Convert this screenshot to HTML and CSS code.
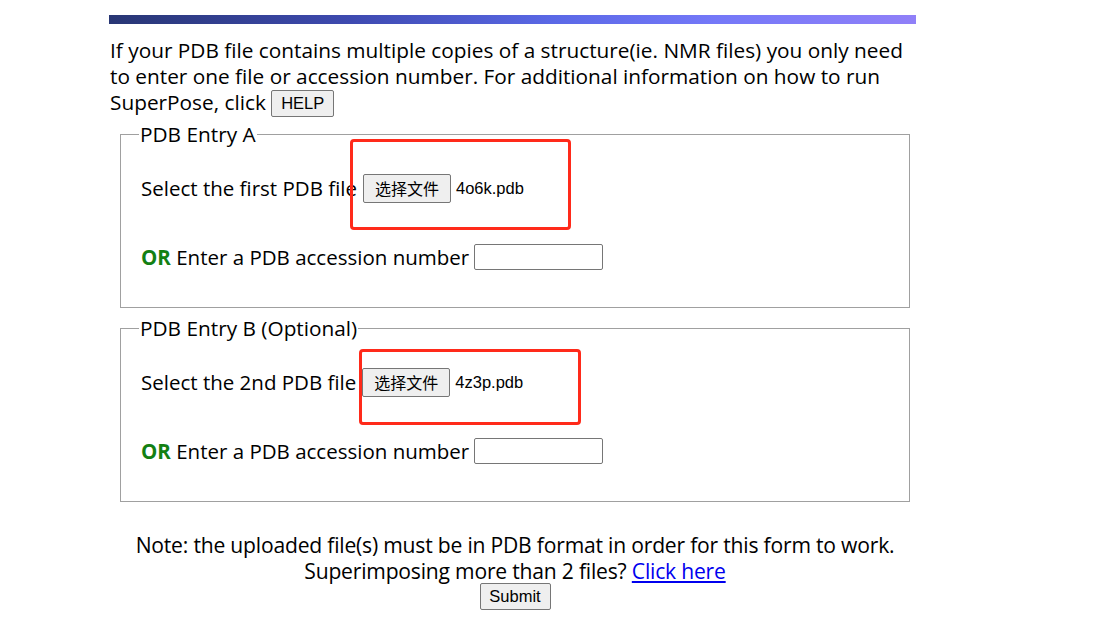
FILE: index.html
```html
<!DOCTYPE html>
<html>
<head>
<meta charset="utf-8">
<link rel="stylesheet" href="styles.css">
</head>
<body>
<div class="page">
  <div class="bar"></div>
  <p class="intro">If your PDB file contains multiple copies of a structure(ie. NMR files) you only need to enter one file or accession number. For additional information on how to run SuperPose, click <button class="btn help">HELP</button></p>
  <fieldset class="entry">
    <legend>PDB Entry A</legend>
    <div class="row file-row">
      <span>Select the first PDB file</span>
      <span class="file"><button class="btn choose">选择文件</button><span class="fname">4o6k.pdb</span></span>
      <span class="mark mark-a"></span>
    </div>
    <div class="row acc-row">
      <span><b class="or">OR</b> Enter a PDB accession number</span>
      <input class="acc" type="text">
    </div>
  </fieldset>
  <fieldset class="entry">
    <legend>PDB Entry B (Optional)</legend>
    <div class="row file-row">
      <span>Select the 2nd PDB file</span>
      <span class="file"><button class="btn choose">选择文件</button><span class="fname">4z3p.pdb</span></span>
      <span class="mark mark-b"></span>
    </div>
    <div class="row acc-row">
      <span><b class="or">OR</b> Enter a PDB accession number</span>
      <input class="acc" type="text">
    </div>
  </fieldset>
  <div class="note">
    <div>Note: the uploaded file(s) must be in PDB format in order for this form to work.</div>
    <div>Superimposing more than 2 files? <a href="#">Click here</a></div>
    <button class="btn submit">Submit</button>
  </div>
</div>
</body>
</html>
```
FILE: styles.css
```css
html, body {
  margin: 0;
  background: #fff;
}
body {
  font-family: "Open Sans", "Noto Sans", sans-serif;
  font-size: 21px;
  color: #000;
}
.page {
  width: 812px;
  margin-left: 109px;
  padding-top: 15px;
}
.bar {
  width: 807px;
  height: 9px;
  background: linear-gradient(to right, #283674 0%, #3e4ab0 30%, #5a68e6 55%, #7478f8 75%, #9080f8 100%);
}
.intro {
  margin: 13px 0 0 1px;
  width: 806px;
  line-height: 26px;
  font-size: 20.8px;
}
.btn {
  font-family: "Liberation Sans", Arial, sans-serif;
  font-size: 16.5px;
  background: #efefef;
  border: 1px solid #767676;
  border-radius: 2px;
  color: #000;
  padding: 1px 6px;
  margin: 0;
  box-sizing: border-box;
}
.help {
  height: 27px;
  width: 63px;
  vertical-align: 1px;
  margin-left: 0;
  padding: 0;
}
.entry {
  position: relative;
  margin: 4px 0 0 11px;
  width: 790px;
  border: 1px solid #a0a0a0;
  padding: 0 0 0 20px;
  box-sizing: border-box;
  height: 187px;
}
.entry + .entry {
  margin-top: 7px;
}
.entry legend {
  padding: 0 1px;
  margin-left: -2px;
  line-height: 26px;
  font-size: 20.8px;
}
.row {
  display: flex;
  align-items: center;
  font-size: 20.5px;
  line-height: 26px;
}
.file-row {
  margin-top: 26px;
  height: 30px;
}
.file {
  display: flex;
  align-items: center;
  margin-left: 6px;
}
.choose {
  font-family: "Noto Sans CJK SC", sans-serif;
  font-size: 16px;
  height: 29px;
  width: 88px;
  padding: 0;
  line-height: 1;
}
.fname {
  font-family: "Liberation Sans", Arial, sans-serif;
  font-size: 16.5px;
  margin-left: 5px;
}
.acc-row {
  margin-top: 41px;
  height: 26px;
}
.or {
  color: #138013;
  font-weight: bold;
}
.acc {
  width: 129px;
  height: 26px;
  box-sizing: border-box;
  margin-left: 5px;
  border: 1px solid #767676;
  border-radius: 2px;
  padding: 0;
}
.mark {
  position: absolute;
  border: 3px solid #ff2a1a;
  border-radius: 4px;
  box-sizing: border-box;
}
.mark-a {
  left: 229px;
  top: -8px;
  width: 221px;
  height: 91px;
}
.mark-b {
  left: 238px;
  top: 8px;
  width: 222px;
  height: 76px;
}
.note {
  text-align: center;
  font-family: "Open Sans", sans-serif;
  font-size: 21.1px;
  line-height: 26px;
  margin-top: 30px;
  letter-spacing: -0.2px;
}
.note a {
  color: #0000ee;
}
.submit {
  display: block;
  height: 27px;
  width: 71px;
  padding: 0;
  margin: -1px auto 0;
}
```
